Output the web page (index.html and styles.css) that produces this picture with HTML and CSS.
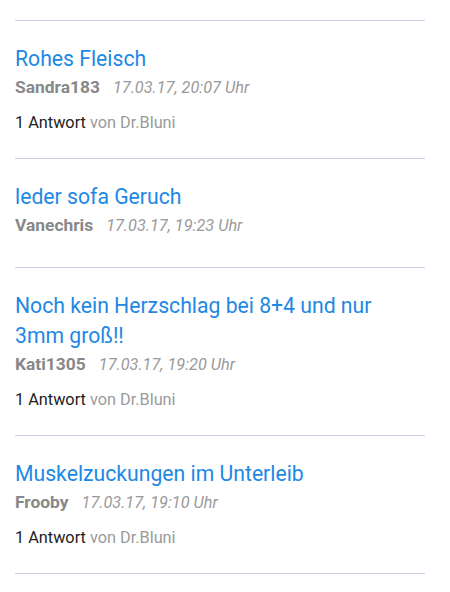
FILE: index.html
```html
<!DOCTYPE html>
<html lang="de">
<head>
<meta charset="utf-8">
<link rel="stylesheet" href="styles.css">
</head>
<body>
<ul class="list">
  <li class="item">
    <a class="title">Rohes Fleisch</a>
    <div class="meta"><span class="user">Sandra183</span><span class="date">17.03.17, 20:07 Uhr</span></div>
    <div class="answers"><span class="count">1 Antwort</span> von Dr.Bluni</div>
  </li>
  <li class="item">
    <a class="title">leder sofa Geruch</a>
    <div class="meta"><span class="user">Vanechris</span><span class="date">17.03.17, 19:23 Uhr</span></div>
  </li>
  <li class="item">
    <a class="title">Noch kein Herzschlag bei 8+4 und nur 3mm groß!!</a>
    <div class="meta"><span class="user">Kati1305</span><span class="date">17.03.17, 19:20 Uhr</span></div>
    <div class="answers"><span class="count">1 Antwort</span> von Dr.Bluni</div>
  </li>
  <li class="item">
    <a class="title">Muskelzuckungen im Unterleib</a>
    <div class="meta"><span class="user">Frooby</span><span class="date">17.03.17, 19:10 Uhr</span></div>
    <div class="answers"><span class="count">1 Antwort</span> von Dr.Bluni</div>
  </li>
</ul>
</body>
</html>
```
FILE: styles.css
```css
html, body {
  margin: 0;
  padding: 0;
  background: #ffffff;
  font-family: Roboto, "Noto Sans", sans-serif;
}
.list {
  list-style: none;
  margin: 0;
  padding: 20px 25px 0 15px;
}
.item {
  border-top: 1px solid #cdcde6;
  padding: 23px 0 17px;
  display: flex;
  flex-direction: column;
}
.item:last-child {
  border-bottom: 1px solid #cdcde6;
}
.title {
  color: #1e88e5;
  font-size: 21.2px;
  line-height: 30px;
  padding-right: 30px;
}
.meta {
  margin-top: 2px;
  margin-bottom: 14px;
  height: 22px;
  line-height: 22px;
  display: flex;
  gap: 13px;
  align-items: baseline;
}
.user {
  font-weight: bold;
  font-size: 17.4px;
  color: #888888;
}
.date {
  font-style: italic;
  font-size: 16.3px;
  color: #9a9a9a;
}
.answers {
  font-size: 16.3px;
  line-height: 22px;
  color: #9a9a9a;
  margin-bottom: 7px;
}
.count {
  color: #222222;
}
```
